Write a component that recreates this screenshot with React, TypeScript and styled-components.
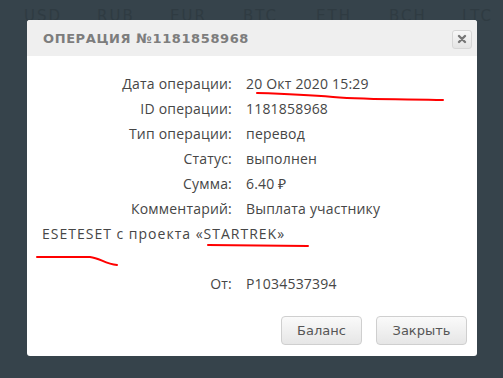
import React from "react";
import styled, { createGlobalStyle } from "styled-components";

const Global = createGlobalStyle`
  html, body { margin: 0; padding: 0; }
  body { background: #36434b; width: 503px; height: 378px; overflow: hidden; }
`;

const Page = styled.div`
  position: relative;
  width: 503px;
  height: 378px;
  background: #36434b;
  overflow: hidden;
`;

const Tabs = styled.div`
  display: flex;
  padding: 6px 0 0 24px;
  height: 20px;
`;

const Tab = styled.span`
  width: 73px;
  flex: none;
  font-family: "DejaVu Sans", sans-serif;
  font-size: 15px;
  letter-spacing: 2px;
  color: #2f3b42;
  line-height: 20px;
`;

const Dialog = styled.div`
  position: absolute;
  left: 27px;
  top: 20px;
  width: 450px;
  height: 336px;
  background: #fff;
  border-radius: 3px;
  display: flex;
  flex-direction: column;
  overflow: hidden;
`;

const Header = styled.div`
  height: 36px;
  background: #efefef;
  display: flex;
  align-items: center;
  justify-content: space-between;
  padding: 0 5px 0 16px;
`;

const Title = styled.div`
  font-family: "DejaVu Sans", sans-serif;
  font-size: 13px;
  font-weight: 700;
  letter-spacing: 0.6px;
  color: #7d7d7d;
`;

const CloseBtn = styled.div`
  width: 18px;
  height: 17px;
  border: 1px solid #d6d6d6;
  border-radius: 3px;
  background: linear-gradient(#f7f7f7, #e4e4e4);
  display: flex;
  align-items: center;
  justify-content: center;
  margin-top: 2px;
`;

const Body = styled.div`
  position: relative;
  padding: 15px 15px 0 15px;
  flex: 1;
`;

const Grid = styled.div`
  display: grid;
  grid-template-columns: 190px 1fr;
  column-gap: 14px;
  font-family: "Open Sans", sans-serif;
  font-size: 14px;
  letter-spacing: 0.2px;
  line-height: 25px;
  color: #464646;
`;

const Label = styled.div`
  text-align: right;
`;

const Value = styled.div``;

const Full = styled.div<{ $tall?: boolean }>`
  grid-column: 1 / span 2;
  height: ${(p) => (p.$tall ? 50 : 25)}px;
  letter-spacing: 1px;
`;

const Footer = styled.div`
  display: flex;
  justify-content: flex-end;
  gap: 14px;
  padding: 0 10px 11px 0;
`;

const Button = styled.button<{ $w: number }>`
  width: ${(p) => p.$w}px;
  height: 29px;
  border: 1px solid #cfcfcf;
  border-radius: 4px;
  background: linear-gradient(#fafafa, #e6e6e6);
  font-family: "DejaVu Sans", sans-serif;
  font-size: 13px;
  color: #555;
  padding: 0;
`;

const Marks = styled.svg`
  position: absolute;
  left: 0;
  top: 0;
  pointer-events: none;
`;

export default function App() {
  return (
    <>
      <Global />
      <Page>
        <Tabs>
          {["USD", "RUB", "EUR", "BTC", "ETH", "BCH", "LTC"].map((t) => (
            <Tab key={t}>{t}</Tab>
          ))}
        </Tabs>
        <Dialog>
          <Header>
            <Title>ОПЕРАЦИЯ №1181858968</Title>
            <CloseBtn>
              <svg width="10" height="10" viewBox="0 0 10 10">
                <path d="M2 2 L8 8 M8 2 L2 8" stroke="#777" strokeWidth="2.4" strokeLinecap="round" />
              </svg>
            </CloseBtn>
          </Header>
          <Body>
            <Grid>
              <Label>Дата операции:</Label>
              <Value>20 Окт 2020 15:29</Value>
              <Label>ID операции:</Label>
              <Value>1181858968</Value>
              <Label>Тип операции:</Label>
              <Value>перевод</Value>
              <Label>Статус:</Label>
              <Value>выполнен</Value>
              <Label>Сумма:</Label>
              <Value>6.40 ₽</Value>
              <Label>Комментарий:</Label>
              <Value>Выплата участнику</Value>
              <Full $tall>ESETESET с проекта «STARTREK»</Full>
              <Label>От:</Label>
              <Value>P1034537394</Value>
            </Grid>
          </Body>
          <Footer>
            <Button $w={81}>Баланс</Button>
            <Button $w={91}>Закрыть</Button>
          </Footer>
        </Dialog>
        <Marks width="503" height="378" viewBox="0 0 503 378">
          <path d="M257 93 C 290 94, 310 95, 333 97 C 370 100, 410 99, 443 100" stroke="#f00" strokeWidth="2" fill="none" strokeLinecap="round" />
          <path d="M208 245 L308 246" stroke="#f00" strokeWidth="2" fill="none" strokeLinecap="round" />
          <path d="M37 257 L90 257 C 100 258, 105 264, 117 265" stroke="#f00" strokeWidth="2" fill="none" strokeLinecap="round" />
        </Marks>
      </Page>
    </>
  );
}
